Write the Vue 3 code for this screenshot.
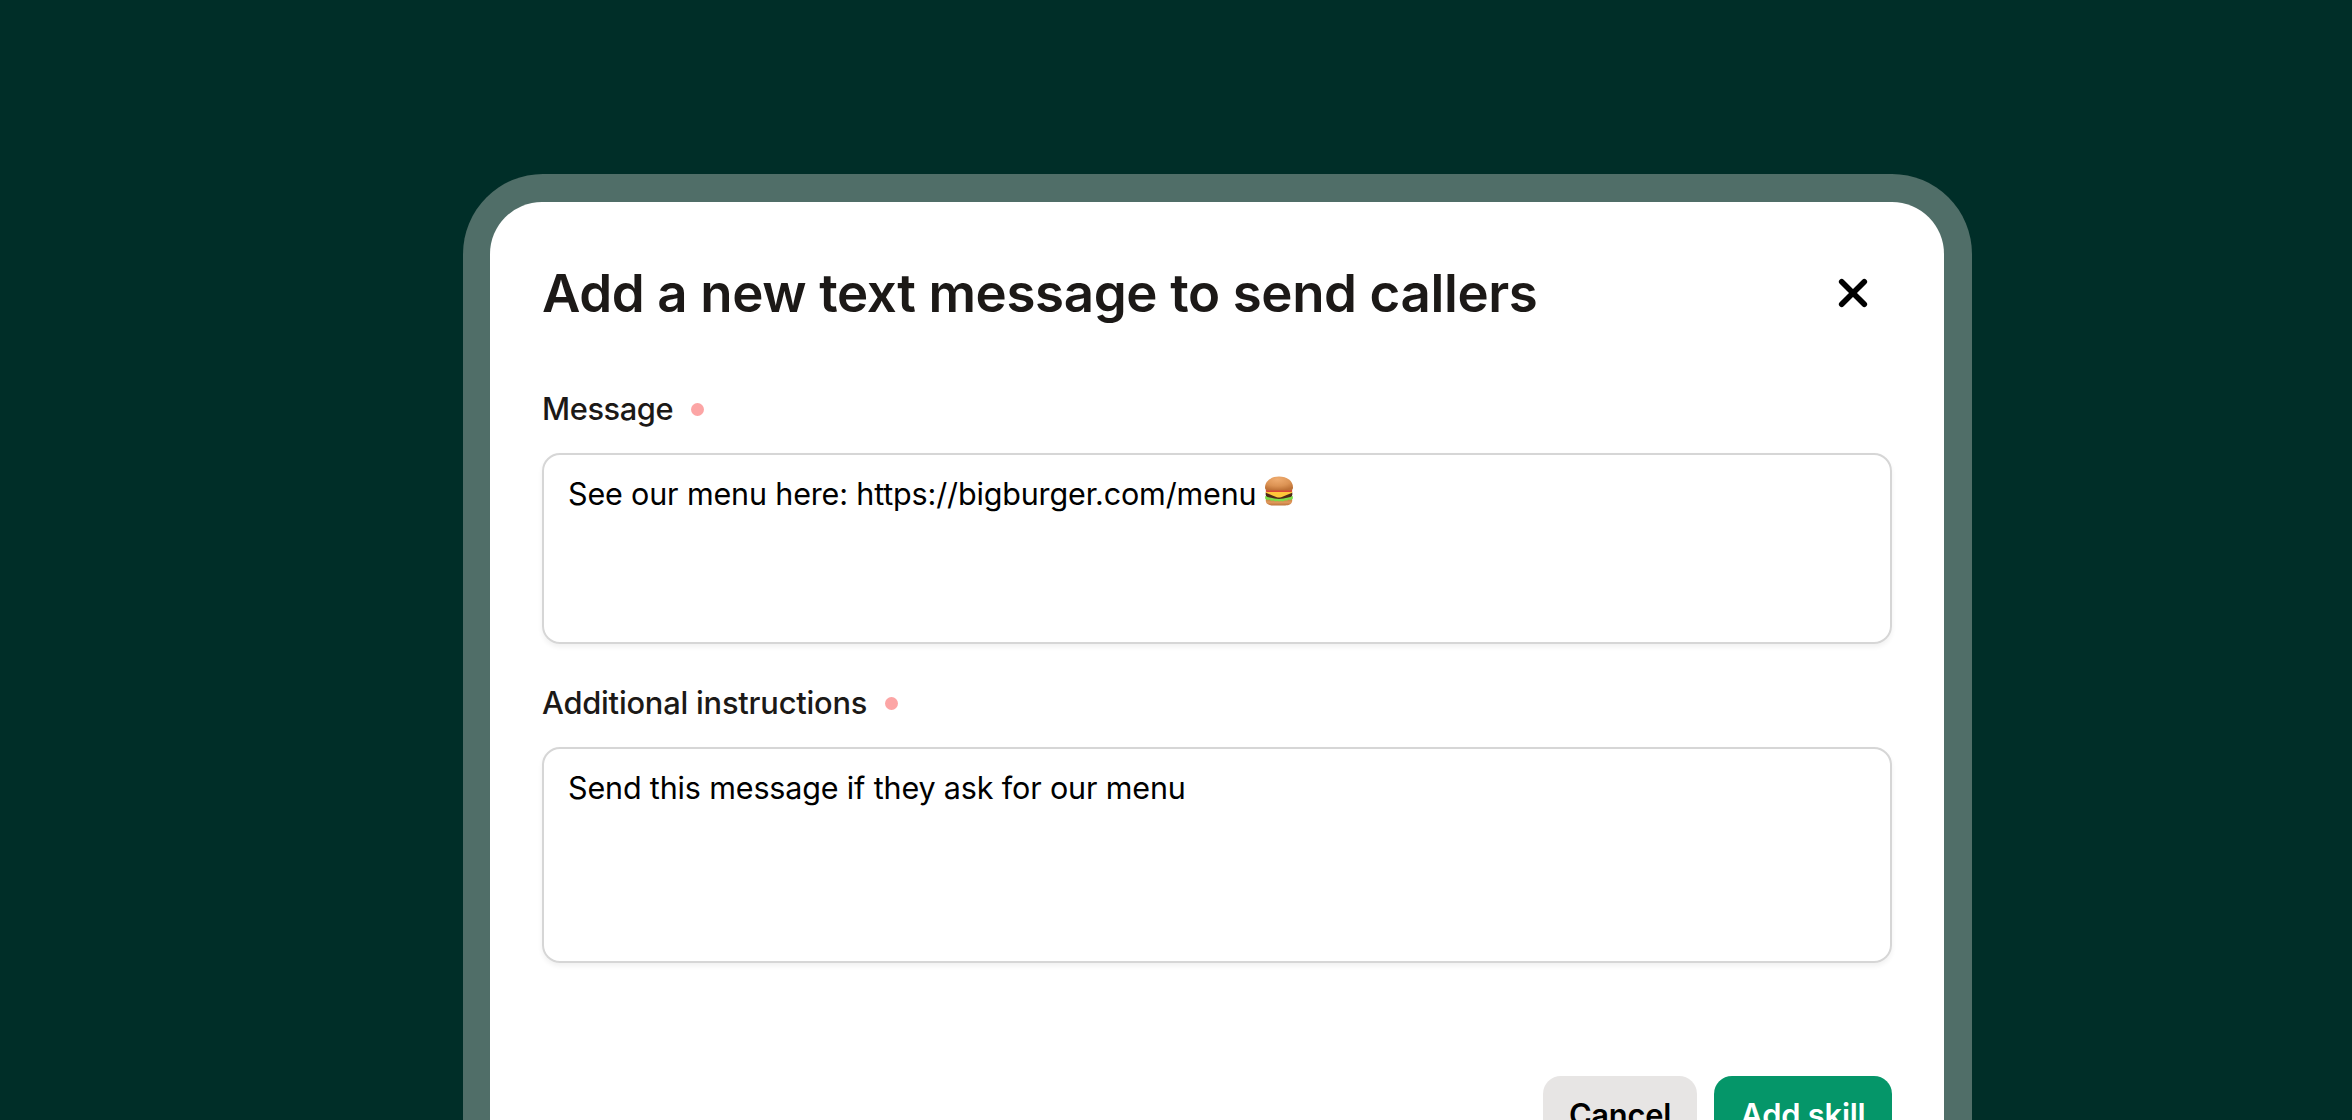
<template>
  <main class="stage">
    <div class="frame">
      <section class="modal" role="dialog" aria-labelledby="modal-title">
        <header class="modal-header">
          <h1 id="modal-title" class="modal-title">Add a new text message to send callers</h1>
          <button class="modal-close" type="button" aria-label="Close">
            <svg viewBox="0 0 30 30" fill="none" stroke="currentColor" stroke-width="5.6" stroke-linecap="round">
              <path d="M3.7 3.7l22.6 22.6M26.3 3.7L3.7 26.3"/>
            </svg>
          </button>
        </header>

        <div v-for="field in fields" :key="field.id" class="field" :class="field.id">
          <div class="field-label">
            <span>{{ field.label }}</span>
            <i class="required-dot"></i>
          </div>
          <div class="field-box">
            <span class="field-text">{{ field.value }}</span>
            <svg v-if="field.burger" class="burger" viewBox="0 0 30 30">
              <defs>
                <radialGradient id="bun" cx="0.45" cy="0.2" r="0.8">
                  <stop offset="0" stop-color="#efac70"/>
                  <stop offset="0.6" stop-color="#dc9354"/>
                  <stop offset="1" stop-color="#bd7136"/>
                </radialGradient>
                <linearGradient id="heel" x1="0" y1="0" x2="0" y2="1">
                  <stop offset="0" stop-color="#c87a3c"/>
                  <stop offset="0.5" stop-color="#e09a5c"/>
                  <stop offset="1" stop-color="#bd743c"/>
                </linearGradient>
              </defs>
              <path d="M1.800 23h26.400v1.800c0 3-3 4.700-7 4.700H8.800c-4 0-7-1.700-7-4.700z" fill="url(#heel)"/>
              <path d="M1.500 22.500q2 2.200 3.800.6 1.900 2.200 3.900.8 1.900 1.900 3.900.6 1.900 1.200 3.900 0 1.900 1.200 3.900-.6 1.900 1 3.900-.8 2 1.400 3.700-.6V20.500H1.500z" fill="#7ddd4a" stroke="#7ddd4a" stroke-width="0.8" stroke-linejoin="round"/>
              <path d="M2 15.800h26c.8 2.700.3 4.700-1.500 5.200l-7 1.600q-4.500.8-9 0l-7-1.600C1.700 20.500 1.200 18.500 2 15.800z" fill="#4f2a18"/>
              <path d="M1.800 15.200h26.400v1.600l-11 4.400q-2.200.8-4.400 0L1.800 16.800z" fill="#ffc63a"/>
              <rect x="1.800" y="13.500" width="26.400" height="2.500" rx="1.200" fill="#d94536"/>
              <path d="M1 11.500C1 5 7 .6 15 .6s14 4.400 14 10.900c0 2-1 2.900-3 2.900H4c-2 0-3-.9-3-2.900z" fill="url(#bun)"/>
            </svg>
          </div>
        </div>

        <footer class="modal-footer">
          <button class="btn btn-cancel" type="button">Cancel</button>
          <button class="btn btn-add" type="button">Add skill</button>
        </footer>
      </section>
    </div>
  </main>
</template>

<script setup>
const fields = [
  {
    id: 'message',
    label: 'Message',
    value: 'See our menu here: https://bigburger.com/menu',
    burger: true
  },
  {
    id: 'instructions',
    label: 'Additional instructions',
    value: 'Send this message if they ask for our menu'
  }
]
</script>

<style>
body {
  background: #002e28;
  overflow: hidden;
}
</style>

<style scoped>
.stage {
  box-sizing: border-box;
  height: 1120px;
  padding: 174px 380px 0 462.6px;
  overflow: hidden;
  background: #002e28;
  font-family: Inter, 'Liberation Sans', sans-serif;
}

.frame {
  box-sizing: border-box;
  width: 1509px;
  height: 1100px;
  padding: 28px 27.6px 28px 27.4px;
  border-radius: 80px;
  background: #506e68;
}

.modal {
  box-sizing: border-box;
  height: 1044px;
  padding: 58px 52px 0;
  border-radius: 52px;
  background: #fff;
}

.modal-header {
  display: flex;
  align-items: center;
  justify-content: space-between;
  height: 66px;
  padding-right: 24px;
}

.modal-title {
  margin: 0;
  color: #1c1917;
  font-size: 52.8px;
  font-weight: 600;
  letter-spacing: -0.36px;
  line-height: 66px;
  white-space: nowrap;
}

.modal-close {
  width: 30px;
  height: 30px;
  padding: 0;
  border: 0;
  background: none;
  color: #000;
}

.modal-close svg {
  display: block;
  width: 30px;
  height: 30px;
}

.field {
  margin-top: 37px;
}

.message {
  margin-top: 60px;
}

.field-label {
  display: flex;
  align-items: center;
  gap: 18px;
  height: 44px;
  color: #1c1917;
  font-size: 30.8px;
  font-weight: 500;
  letter-spacing: -0.2px;
}

.message .field-label {
  letter-spacing: -0.4px;
}

.required-dot {
  width: 13px;
  height: 13px;
  margin-top: 2px;
  border-radius: 50%;
  background: #fca5a5;
}

.field-box {
  box-sizing: border-box;
  display: flex;
  align-items: flex-start;
  height: 190.5px;
  margin-top: 23px;
  padding: 17px 24px;
  border: 2px solid #d6d6d6;
  border-radius: 18px;
  box-shadow: 0 3px 5px rgba(0, 0, 0, 0.06);
  color: #000;
  font-size: 30.5px;
  letter-spacing: -0.15px;
  line-height: 44px;
}

.instructions .field-box {
  height: 216.5px;
  margin-top: 22px;
}

.burger {
  width: 30px;
  height: 30px;
  margin: 4px 0 0 8px;
}

.modal-footer {
  display: flex;
  justify-content: flex-end;
  gap: 17px;
  margin-top: 113px;
}

.btn {
  height: 79px;
  padding: 0 0 2px;
  border: 0;
  border-radius: 18px;
  font-family: inherit;
  font-size: 30.8px;
  font-weight: 600;
  letter-spacing: -0.2px;
}

.btn-cancel {
  width: 154px;
  background: #e7e5e4;
  color: #000;
}

.btn-add {
  width: 178px;
  background: #059669;
  color: #fff;
}
</style>
